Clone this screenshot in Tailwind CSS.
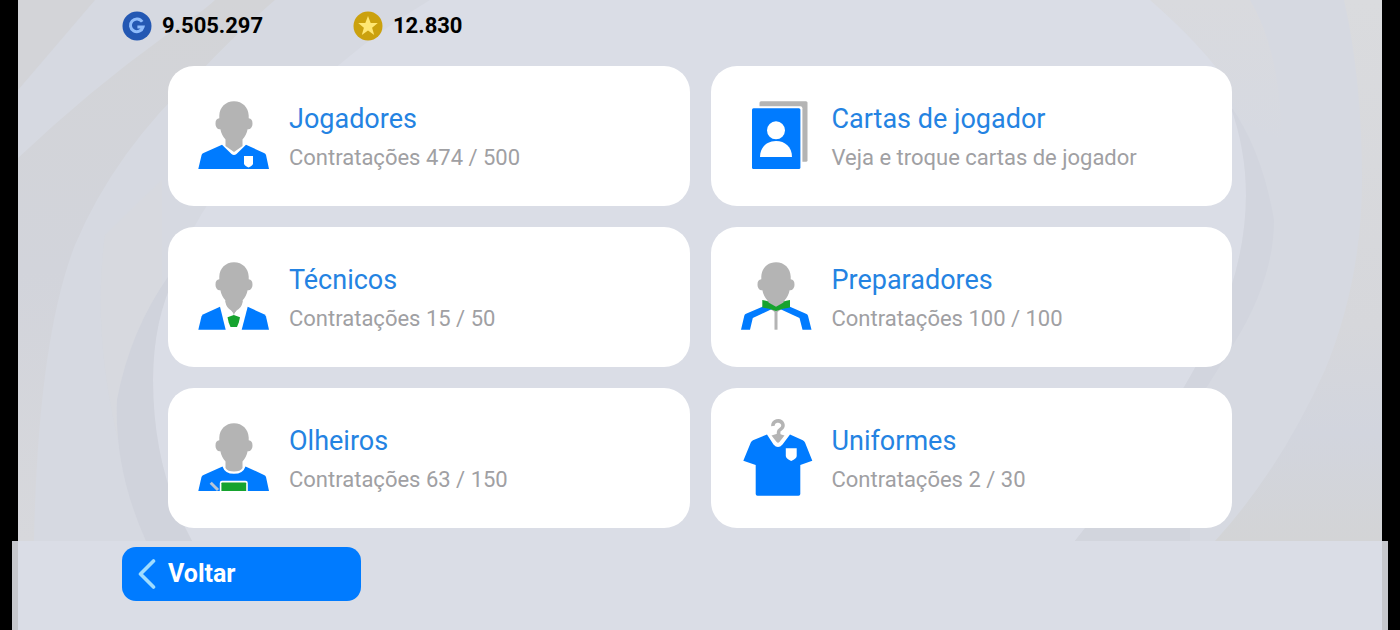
<!DOCTYPE html>
<html lang="pt-BR">
<head>
    <meta charset="UTF-8">
    <meta name="viewport" content="width=device-width, initial-scale=1.0">
    <title>Contratações</title>
    <script src="https://cdn.jsdelivr.net/npm/@tailwindcss/browser@4"></script>
</head>
<body class="bg-black min-h-screen flex flex-col font-[Roboto,sans-serif]">
    <svg class="hidden">
        <defs>
            <!-- head shared by all staff icons -->
            <path id="head" d="M36 5.3C27.5 5.3 21.6 11.5 21.3 19.5V22.3C18.8 22.3 17.5 24.5 17.5 27.5C17.5 31 19.3 33.3 22.4 33.3C23 37 25 41 27.5 43.5V50L36 56L44.5 50V43.5C47 41 49 37 49.6 33.3C52.7 33.3 54.5 31 54.5 27.5C54.5 24.5 53.2 22.3 50.7 22.3V19.5C50.4 11.5 44.5 5.3 36 5.3Z"/>
        </defs>
    </svg>

    <main class="relative mx-[18px] flex-1 bg-[#d6d9e1] overflow-hidden">
        <!-- swirl background -->
        <svg class="absolute inset-0 w-full h-full" viewBox="18 0 1364 541" preserveAspectRatio="none" aria-hidden="true">
            <defs>
                <linearGradient id="gray-left" x1="0" y1="0" x2="0" y2="1">
                    <stop offset="0" stop-color="#d3d4d7"/>
                    <stop offset="0.5" stop-color="#d2d4db"/>
                    <stop offset="1" stop-color="#d7d8dc"/>
                </linearGradient>
                <linearGradient id="gray-right" x1="0" y1="0" x2="0" y2="1">
                    <stop offset="0" stop-color="#dadbde"/>
                    <stop offset="0.6" stop-color="#d6d7db"/>
                    <stop offset="0.8" stop-color="#d2d5de"/>
                    <stop offset="1" stop-color="#d3d4d6"/>
                </linearGradient>
                <linearGradient id="fade-right" x1="0" y1="0" x2="0" y2="1">
                    <stop offset="0" stop-color="#d9dade"/>
                    <stop offset="1" stop-color="#d9dade" stop-opacity="0"/>
                </linearGradient>
            </defs>
            <path fill="#d3d4d8" d="M18 0H95L18 90Z"/>
            <path fill="url(#gray-left)" d="M18 158Q90 90 165 36Q200 14 215 0H275Q240 30 200 72Q115 150 75 245Q38 340 34 541H18Z"/>
            <path fill="#d8dade" d="M105 235Q135 205 162 180V300Q125 350 118 440Q92 330 105 235Z" opacity="0.5"/>
            <path fill="url(#fade-right)" d="M1150 0H1250Q1280 50 1282 140L1240 120Q1220 60 1180 60Z"/>
            <path fill="url(#gray-right)" d="M1344 0H1382V541H1215Q1280 470 1325 370Q1362 280 1362 180Q1362 80 1344 0Z"/>
            <path fill="#dadde6" d="M430 0H1150Q1190 35 1215 66Q1246 125 1246 195Q1246 260 1215 330Q1160 440 1075 541H192Q153 470 153 380Q153 210 345 60Q380 30 430 0Z"/>
            <path fill="#d0d3dc" d="M170 274Q130 330 117 400Q114 470 146 541H192Q153 470 153 380Q153 320 176 274Z"/>
            <path fill="#d2d5de" d="M1230 105Q1262 150 1274 220Q1274 280 1233 345Q1150 480 1100 541H1075Q1160 440 1215 330Q1246 260 1246 195Q1246 150 1230 105Z"/>
            <path fill="#d2d5dd" d="M1085 528H1190V541H1075Z"/>
        </svg>

        <div class="relative">
            <header class="h-[66px] flex items-start pt-[11px] pl-[104px] text-[22px] leading-[30px] font-bold text-black">
                <div class="w-[231px] flex items-center gap-[10px]">
                    <svg class="w-[30px] h-[30px]" viewBox="0 0 30 30" aria-hidden="true">
                        <circle cx="15" cy="15" r="14.5" fill="#2458b3"/>
                        <path d="M20.2 10.8A6.4 6.4 0 1 0 21 16H15.4" fill="none" stroke="#8fbcfb" stroke-width="3"/>
                    </svg>
                    <span>9.505.297</span>
                </div>
                <div class="flex items-center gap-[10px]">
                    <svg class="w-[30px] h-[30px]" viewBox="0 0 30 30" aria-hidden="true">
                        <circle cx="15" cy="15" r="14.5" fill="#cba10d"/>
                        <path d="M15 5L17.7 12.1H24.8L19.1 16.7L21.2 24L15 19.6L8.8 24L10.9 16.7L5.2 12.1H12.3Z" fill="#ffe773"/>
                    </svg>
                    <span>12.830</span>
                </div>
            </header>

            <nav class="grid grid-cols-2 gap-[21px] px-[150px] pb-[13px]">
                <a href="#" class="h-[140px] flex items-center gap-[19px] pl-[30px] rounded-[26px] bg-white">
                    <svg class="w-[72px] h-20 shrink-0" viewBox="0 0 72 80" aria-hidden="true">
                        <use href="#head" fill="#b4b4b4"/>
                        <path d="M0.3 73L3.6 59Q4 57.5 5.5 57L24 48.7L33.5 58Q36 60 38.5 58L48 48.7L66 57Q67.5 57.5 68 59L71 73Z" fill="#007bff"/>
                        <path d="M46 60H55V67.5Q55 69.5 50.5 71.5Q46 69.5 46 67.5Z" fill="#fff"/>
                    </svg>
                    <div class="pt-[2px]">
                        <h2 class="text-[27px] leading-9 text-[#2483e2]">Jogadores</h2>
                        <p class="mt-[5px] text-[22px] leading-8 text-[#a0a0a3]">Contratações 474 / 500</p>
                    </div>
                </a>

                <a href="#" class="h-[140px] flex items-center gap-[19px] pl-[30px] rounded-[26px] bg-white">
                    <svg class="w-[72px] h-20 shrink-0" viewBox="0 0 72 80" aria-hidden="true">
                        <rect x="18.5" y="5.3" width="48" height="60.4" rx="1.5" fill="#b4b4b4"/>
                        <rect x="9" y="10.3" width="52.4" height="65" rx="2" fill="#fff"/>
                        <rect x="11" y="12.3" width="48.4" height="60.7" rx="1.5" fill="#007bff"/>
                        <circle cx="35" cy="34.3" r="9" fill="#fff"/>
                        <path d="M19 61C19 51 26 45 35 45C44 45 51 51 51 61Z" fill="#fff"/>
                    </svg>
                    <div class="pt-[2px]">
                        <h2 class="text-[27px] leading-9 text-[#2483e2]">Cartas de jogador</h2>
                        <p class="mt-[5px] text-[22px] leading-8 text-[#a0a0a3]">Veja e troque cartas de jogador</p>
                    </div>
                </a>

                <a href="#" class="h-[140px] flex items-center gap-[19px] pl-[30px] rounded-[26px] bg-white">
                    <svg class="w-[72px] h-20 shrink-0" viewBox="0 0 72 80" aria-hidden="true">
                        <use href="#head" fill="#b4b4b4"/>
                        <path d="M21 47.5L28 45L35.8 57L44 45L51 47.5L46 62H26Z" fill="#fff"/>
                        <path d="M27.5 43.5H44.5V45.5Q43.5 51 38.5 53.5Q36.8 55 35.9 58.5Q35 55 33.3 53.5Q28.5 51 27.5 45.5Z" fill="#b4b4b4"/>
                        <path d="M0.3 72.7L3.5 59.5Q4 58 5.5 57.3L22 49.8L27.7 72.7Z" fill="#007bff"/>
                        <path d="M71 72.7L68 59.5Q67.5 58 66 57.3L49.7 49.8L43.7 72.7Z" fill="#007bff"/>
                        <path d="M29.5 60.2L35.8 58L42 60.2L40.8 65.5L39 70H32.5L30.7 65.5Z" fill="#16a32e"/>
                    </svg>
                    <div class="pt-[2px]">
                        <h2 class="text-[27px] leading-9 text-[#2483e2]">Técnicos</h2>
                        <p class="mt-[5px] text-[22px] leading-8 text-[#a0a0a3]">Contratações 15 / 50</p>
                    </div>
                </a>

                <a href="#" class="h-[140px] flex items-center gap-[19px] pl-[30px] rounded-[26px] bg-white">
                    <svg class="w-[72px] h-20 shrink-0" viewBox="0 0 72 80" aria-hidden="true">
                        <use href="#head" x="-1" fill="#b4b4b4"/>
                        <rect x="33.5" y="53" width="3" height="19.7" fill="#b4b4b4"/>
                        <path d="M0 72.7L3.3 58.8Q3.6 57.5 5 56.8L22 49.5L31 52L11.8 61L9 72.7Z" fill="#007bff"/>
                        <path d="M70.5 72.7L67 58.8Q66.6 57.5 65 56.8L48.4 49.5L39 52L58.5 61L61.5 72.7Z" fill="#007bff"/>
                        <path d="M21.3 43Q29 44 35 48.5Q41 44 49 43V50.5Q42 51 35 54Q28 51 21.3 50.5Z" fill="#16a32e"/>
                        <path d="M27.5 45.4V43.5L35 42H42.5V45.4L35 49.8Z" fill="#b4b4b4"/>
                    </svg>
                    <div class="pt-[2px]">
                        <h2 class="text-[27px] leading-9 text-[#2483e2]">Preparadores</h2>
                        <p class="mt-[5px] text-[22px] leading-8 text-[#a0a0a3]">Contratações 100 / 100</p>
                    </div>
                </a>

                <a href="#" class="h-[140px] flex items-center gap-[19px] pl-[30px] rounded-[26px] bg-white">
                    <svg class="w-[72px] h-20 shrink-0" viewBox="0 0 72 80" aria-hidden="true">
                        <path d="M0.3 73L3.5 59Q4 57.5 5.5 57L24.5 48.4Q27 55.8 36 55.8Q45 55.8 47.5 48.4L66 57Q67.5 57.5 68 59L71 73Z" fill="#007bff"/>
                        <path d="M36 5.3C27.5 5.3 21.6 11.5 21.3 19.5V22.3C18.8 22.3 17.5 24.5 17.5 27.5C17.5 31 19.3 33.3 22.4 33.3C23 37 25 41 27.5 43.5V50Q29.5 53.5 36 53.5Q42.5 53.5 44.5 50V43.5C47 41 49 37 49.6 33.3C52.7 33.3 54.5 31 54.5 27.5C54.5 24.5 53.2 22.3 50.7 22.3V19.5C50.4 11.5 44.5 5.3 36 5.3Z" fill="#b4b4b4"/>
                        <path d="M12.7 64.8L20 72" stroke="#b9c6d6" stroke-width="3"/>
                        <path d="M21.8 73V65Q21.8 62.8 24 62.8H47.5Q49.8 62.8 49.8 65V73Z" fill="#fff"/>
                        <path d="M23.4 73V65.3Q23.4 64.4 24.3 64.4H47.3Q48.2 64.4 48.2 65.3V73Z" fill="#16a32e"/>
                    </svg>
                    <div class="pt-[2px]">
                        <h2 class="text-[27px] leading-9 text-[#2483e2]">Olheiros</h2>
                        <p class="mt-[5px] text-[22px] leading-8 text-[#a0a0a3]">Contratações 63 / 150</p>
                    </div>
                </a>

                <a href="#" class="h-[140px] flex items-center gap-[19px] pl-[30px] rounded-[26px] bg-white">
                    <svg class="w-[72px] h-20 shrink-0" viewBox="0 0 72 80" aria-hidden="true">
                        <path d="M26 16.5L12 22.3Q10.5 23 9.8 24.5L2.3 42.7L14.7 47V76Q14.7 77.8 16.5 77.8H57.5Q59.3 77.8 59.3 76V47L71.3 42.7L64 24.5Q63.3 23 61.8 22.3L49 16.5L41.5 26.5Q37 31.5 32.5 26.5Z" fill="#007bff"/>
                        <path d="M32 8A5 4.5 0 1 1 39.6 11.2Q37.6 12.3 37.6 14V18" fill="none" stroke="#b4b4b4" stroke-width="3.6"/>
                        <path d="M30.5 17.6L37 15.5L43.5 17.6L38.6 23.8Q37 25.5 35.4 23.8Z" fill="#b4b4b4"/>
                        <path d="M44.8 30.2H55.7V38Q55.7 40.5 50.2 43Q44.8 40.5 44.8 38Z" fill="#fff"/>
                    </svg>
                    <div class="pt-[2px]">
                        <h2 class="text-[27px] leading-9 text-[#2483e2]">Uniformes</h2>
                        <p class="mt-[5px] text-[22px] leading-8 text-[#a0a0a3]">Contratações 2 / 30</p>
                    </div>
                </a>
            </nav>
        </div>
    </main>

    <footer class="mx-3 h-[89px] border-x-6 border-[#c6c7cc] bg-[#dadde6] pt-[6px] pl-[104px]">
        <button type="button" class="w-[239px] h-[54px] flex items-center gap-3 pl-4 rounded-[14px] bg-[#007bff] text-[25px] font-bold text-white">
            <svg class="w-[18px] h-8" viewBox="0 0 18 32" aria-hidden="true">
                <path d="M15.5 3L2.5 16L15.5 29" fill="none" stroke="#9fdcff" stroke-width="3.6" stroke-linecap="round" stroke-linejoin="round"/>
            </svg>
            Voltar
        </button>
    </footer>
</body>
</html>
